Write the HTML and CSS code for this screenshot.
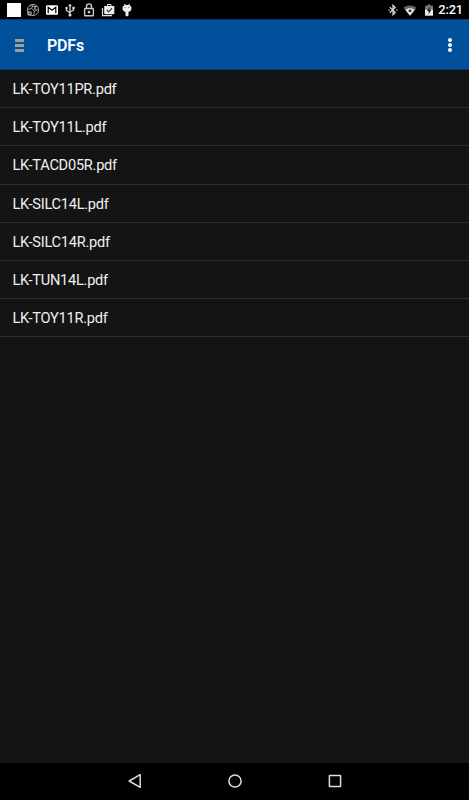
FILE: index.html
```html
<!DOCTYPE html>
<html lang="en">

    <head>
        <meta charset="UTF-8">
        <meta name="viewport" content="width=device-width, initial-scale=1.0">
        <title>PDFs</title>
        <link rel="stylesheet" href="styles.css">
    </head>

    <body>
        <div class="status-bar">
            <div class="notifications">
                <span class="blank-icon"></span>
                <!-- globe -->
                <svg width="14" height="14" viewBox="0 0 14 14" fill="none" stroke="#999" stroke-width="1">
                    <circle cx="7" cy="7" r="5.6" />
                    <path d="M1.5 6.5l4-1 2-4M5.5 5.5l3 2.5 4-1.5M4 2.5l3.5 1 4 0M8.5 8l-1 4.5" />
                    <path d="M2 9h3v3H2zM9 3v4" stroke="#ccc" />
                </svg>
                <!-- mail -->
                <svg width="14" height="14" viewBox="0 0 14 14">
                    <rect x="1" y="2.2" width="12" height="9.6" rx="1" fill="#fff" />
                    <path d="M3.2 10.3V4.2L7 7.2l3.8-3v6.1" fill="none" stroke="#000" stroke-width="1.2" />
                </svg>
                <!-- usb -->
                <svg width="14" height="14" viewBox="0 0 14 14" fill="none" stroke="#ddd" stroke-width="1.2">
                    <path d="M7 2.5v9M3.5 5.5v2L7 9.7M10.5 5v2.2L7 9" />
                    <path d="M7 0.5l1.8 2.7H5.2z" fill="#ddd" stroke="none" />
                    <circle cx="7" cy="12" r="1.5" fill="#ddd" stroke="none" />
                    <circle cx="3.5" cy="5" r="1.2" fill="#ddd" stroke="none" />
                    <path d="M9.3 3.8h2.4v2.4H9.3z" fill="#ddd" stroke="none" />
                </svg>
                <!-- lock -->
                <svg width="14" height="14" viewBox="0 0 14 14" fill="none" stroke="#ccc" stroke-width="1.4">
                    <path d="M4.5 5.5V3.4a2.5 2.5 0 0 1 5 0v2.1" />
                    <rect x="2.6" y="5.5" width="8.8" height="7.2" rx="0.8" />
                    <circle cx="7" cy="9.1" r="1.3" fill="#ccc" stroke="none" />
                </svg>
                <!-- installed apps -->
                <svg width="14" height="14" viewBox="0 0 14 14">
                    <path d="M1.5 5v7.6H11" fill="none" stroke="#ddd" stroke-width="1.2" />
                    <path d="M3.2 3H6V1.8L7 1h2.5l1 .8V3h2.8v7.2a1 1 0 0 1-1 1H4.2a1 1 0 0 1-1-1zM7 2v1h2.5V2z" fill="#eee" fill-rule="evenodd" />
                    <path d="M5.8 7l1.8 1.8L11 5.3" fill="none" stroke="#222" stroke-width="1.1" />
                </svg>
                <!-- debugging -->
                <svg width="14" height="14" viewBox="0 0 14 14" fill="#eee">
                    <path d="M2.5 5.3c0-1.6.8-2.5 2-3L4 1h1l.7 1h2.6L9 1h1l-.5 1.3c1.2.5 2 1.4 2 3 0 2-1.3 3.4-3 3.8v3.2c0 1.3-3 1.3-3 0V9.1c-1.7-.4-3-1.8-3-3.8z" />
                    <path d="M4.7 3.8h1v1h-1zM8.3 3.8h1v1h-1z" fill="#555" />
                </svg>
            </div>
            <div class="system">
                <!-- bluetooth -->
                <svg width="10" height="14" viewBox="0 0 10 14" fill="none" stroke="#ddd" stroke-width="1.2">
                    <path d="M1.8 4.2l5.4 5.2L5 11.7V2.3l2.2 2.3-5.4 5.2" />
                    <path d="M.5 6.5h1.2v1.2H.5zM8.3 6.5h1.2v1.2H8.3z" fill="#ddd" stroke="none" />
                </svg>
                <!-- wifi -->
                <svg class="wifi" width="14" height="14" viewBox="0 0 14 14">
                    <path d="M.5 4.7C4.2 1.7 9.8 1.7 13.5 4.7L7 12.7z" fill="#666" />
                    <path d="M2.3 6.8c2.9-2.2 6.5-2.2 9.4 0L7 12.7z" fill="#eee" />
                    <circle cx="7" cy="7.7" r="1.5" fill="#333" />
                </svg>
                <!-- battery -->
                <svg class="battery" width="10" height="14" viewBox="0 0 10 14">
                    <path d="M1 2.8h2.5V1.5h3v1.3H9v3.7H1z" fill="#777" />
                    <path d="M1 6.5h8v6.2H1z" fill="#eee" />
                    <path d="M5.5 3.8L3 8h1.7v3.2L7.2 7H5.5z" fill="#111" />
                </svg>
                <span class="clock">2:21</span>
            </div>
        </div>

        <header class="app-bar">
            <span class="menu-icon"><i></i><i></i><i></i></span>
            <h1>PDFs</h1>
            <span class="more-icon"><i></i><i></i><i></i></span>
        </header>

        <main>
            <ul class="file-list">
                <li>LK-TOY11PR.pdf</li>
                <li>LK-TOY11L.pdf</li>
                <li>LK-TACD05R.pdf</li>
                <li>LK-SILC14L.pdf</li>
                <li>LK-SILC14R.pdf</li>
                <li>LK-TUN14L.pdf</li>
                <li>LK-TOY11R.pdf</li>
            </ul>
        </main>

        <nav class="nav-bar">
            <svg width="16" height="16" viewBox="0 0 16 16">
                <path d="M2.2 8l11-6.3v12.6z" />
            </svg>
            <svg width="16" height="16" viewBox="0 0 16 16">
                <circle cx="8" cy="8" r="6.1" />
            </svg>
            <svg width="16" height="16" viewBox="0 0 16 16">
                <rect x="2.4" y="2.4" width="11.2" height="11.2" rx="0.5" />
            </svg>
        </nav>
    </body>

</html>
```

FILE: styles.css
```css
:root {
    --bar-color: #00509b;
    --bg-color: #141414;
    --line-color: #303030;
    --text-color: #f0f0f0;
}

*,
*::before,
*::after {
    box-sizing: border-box;
}

body {
    margin: 0;
    height: 100vh;
    display: flex;
    flex-direction: column;
    overflow: hidden;
    font-family: Roboto, sans-serif;
    background: var(--bg-color);
    color: var(--text-color);
}

svg {
    display: block;
    flex: none;
}

.status-bar {
    flex: none;
    height: 19px;
    padding: 0 6px 0 7px;
    display: flex;
    justify-content: space-between;
    background: #000;
}

.notifications {
    display: flex;
    gap: 4.8px;
    padding-top: 3px;
}

.blank-icon {
    width: 14px;
    height: 14px;
    background: #fff;
}

.system {
    display: flex;
    padding-top: 3px;
}

.wifi {
    margin-left: 5px;
}

.battery {
    margin-left: 7px;
}

.clock {
    margin-left: 4px;
    font-size: 12.8px;
    font-weight: 500;
    line-height: 14px;
    letter-spacing: -0.1px;
    color: #fff;
}

.app-bar {
    flex: none;
    height: 51px;
    padding: 0 17px 0 15px;
    display: flex;
    align-items: center;
    background: var(--bar-color);
    border-top: 1px solid #033c74;
    border-bottom: 1px solid #033c74;
}

.app-bar h1 {
    flex: 1;
    margin: 1px 0 0 23px;
    font-size: 16px;
    font-weight: 600;
    letter-spacing: -0.2px;
    color: #fff;
}

.menu-icon {
    width: 9px;
    margin-top: 1px;
    display: grid;
    gap: 2px;
}

.menu-icon i {
    height: 3px;
    background: #a09c9a;
}

.more-icon {
    width: 4px;
    display: grid;
    gap: 1px;
}

.more-icon i {
    height: 4px;
    border-radius: 50%;
    background: #fff;
}

main {
    flex: 1;
}

.file-list {
    margin: 0;
    padding: 0;
    list-style: none;
}

.file-list li {
    height: 38.2px;
    padding-left: 12.5px;
    border-bottom: 1px solid var(--line-color);
    font-size: 14.6px;
    letter-spacing: -0.26px;
    line-height: 39px;
}

.nav-bar {
    flex: none;
    height: 37px;
    padding-bottom: 1px;
    display: flex;
    justify-content: center;
    align-items: center;
    gap: 84px;
    background: #000;
}

.nav-bar svg {
    fill: none;
    stroke: #ddd;
    stroke-width: 1.5;
    stroke-linejoin: round;
}
```
